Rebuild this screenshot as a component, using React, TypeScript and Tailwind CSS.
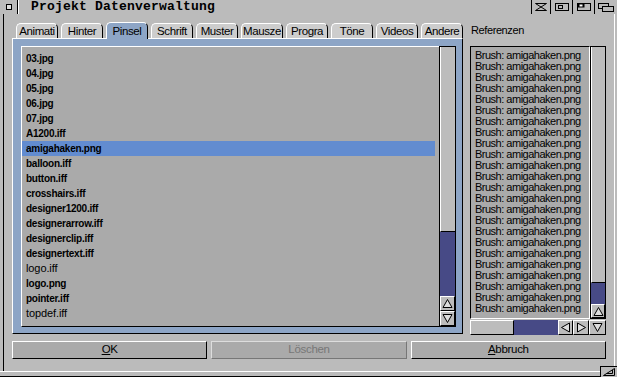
import React from "react";

const leftItems: { name: string; bold: boolean }[] = [
  { name: "03.jpg", bold: true },
  { name: "04.jpg", bold: true },
  { name: "05.jpg", bold: true },
  { name: "06.jpg", bold: true },
  { name: "07.jpg", bold: true },
  { name: "A1200.iff", bold: true },
  { name: "amigahaken.png", bold: true },
  { name: "balloon.iff", bold: true },
  { name: "button.iff", bold: true },
  { name: "crosshairs.iff", bold: true },
  { name: "designer1200.iff", bold: true },
  { name: "designerarrow.iff", bold: true },
  { name: "designerclip.iff", bold: true },
  { name: "designertext.iff", bold: true },
  { name: "logo.iff", bold: false },
  { name: "logo.png", bold: true },
  { name: "pointer.iff", bold: true },
  { name: "topdef.iff", bold: false },
];

const tabs = ["Animati", "Hinter", "Pinsel", "Schrift", "Muster", "Mausze", "Progra", "Töne", "Videos", "Andere"];

function ArrowIcon({ dir }: { dir: "up" | "down" | "left" | "right" }) {
  const d: Record<string, string> = {
    up: "M5.5 1.5 L10 9.5 H1 Z",
    down: "M1 1.5 H10 L5.5 9.5 Z",
    left: "M1.5 5.5 L9.5 1 V10 Z",
    right: "M9.5 5.5 L1.5 1 V10 Z",
  };
  return (
    <svg width="11" height="11" viewBox="0 0 11 11">
      <path d={d[dir]} fill="#dddddd" stroke="#000" strokeWidth="1" />
    </svg>
  );
}

function ArrowBtn({ dir, cls }: { dir: "up" | "down" | "left" | "right"; cls: string }) {
  return (
    <div className={`${cls} shrink-0 flex items-center justify-center bg-[#bcbcbc] border-t border-l border-white border-b border-r border-b-black border-r-black`}>
      <ArrowIcon dir={dir} />
    </div>
  );
}

export default function App() {
  return (
    <div className="relative w-[617px] h-[377px] bg-[#bbbbbb] flex flex-col overflow-hidden font-['Liberation_Sans',sans-serif] text-black">
      {/* Title bar */}
      <div className="h-[14px] shrink-0 flex items-stretch">
        <div className="w-[18px] flex items-center justify-center border-r border-black">
          <div className="w-[6px] h-[6px] border border-black bg-[#dddddd]" />
        </div>
        <div className="w-px bg-white" />
        <div className="flex-1 pl-[12px] font-['Liberation_Mono',monospace] font-bold text-[13px] leading-[14px] tracking-[0.2px] whitespace-nowrap">
          Projekt Datenverwaltung
        </div>
        <div className="w-[19px] flex items-center justify-center border-l border-black">
          <svg width="12" height="8" viewBox="0 0 12 8">
            <path d="M0.5 0.5 H11.5 L6 4 L11.5 7.5 H0.5 L6 4 Z" fill="none" stroke="#000" strokeWidth="1" />
          </svg>
        </div>
        <div className="w-[22px] flex items-center justify-center border-l border-black">
          <svg width="14" height="8" viewBox="0 0 14 8">
            <rect x="0.5" y="0.5" width="13" height="7" fill="none" stroke="#000" />
            <rect x="3.5" y="2.5" width="4" height="3" fill="none" stroke="#000" />
          </svg>
        </div>
        <div className="w-[22px] flex items-center justify-center border-l border-black">
          <svg width="14" height="8" viewBox="0 0 14 8">
            <rect x="0.5" y="0.5" width="13" height="7" fill="none" stroke="#000" />
            <rect x="0.5" y="0.5" width="7" height="4" fill="#000" />
            <rect x="2.5" y="1.5" width="3" height="2" fill="#ffffff" />
          </svg>
        </div>
        <div className="w-[23px] flex items-center justify-center border-l border-black">
          <svg width="16" height="9" viewBox="0 0 16 9">
            <rect x="0.5" y="0.5" width="10" height="5" fill="none" stroke="#000" />
            <rect x="4.5" y="3.5" width="11" height="5" fill="#bbbbbb" stroke="#000" />
          </svg>
        </div>
      </div>

      {/* Body */}
      <div className="flex-1 flex ml-[3px] border-l border-black">
        <div className="flex-1 flex flex-col pl-[8px] pr-[8px] pt-[8px]">
          <div className="flex gap-[7px]">
            {/* Left: register group */}
            <div className="w-[451px] flex flex-col">
              <div className="h-[16px] flex items-end gap-[3px] pl-[4px]">
                {tabs.map((t) =>
                  t === "Pinsel" ? (
                    <div
                      key={t}
                      className="relative z-10 -mb-px w-[42px] h-[17px] shrink-0 overflow-hidden rounded-t-[5px] bg-[#8da5c6] border-l border-t border-white border-r border-r-black flex items-center justify-center text-[11.5px] tracking-[-0.4px] leading-[14px] whitespace-nowrap"
                    >
                      {t}
                    </div>
                  ) : (
                    <div
                      key={t}
                      className="w-[42px] h-[15px] shrink-0 overflow-hidden rounded-t-[5px] bg-[#cdcdcd] border-l border-t border-white border-r border-r-black flex items-center justify-center text-[11.5px] tracking-[-0.4px] leading-[14px] whitespace-nowrap"
                    >
                      {t}
                    </div>
                  )
                )}
              </div>
              <div className="h-[296px] bg-[#8da5c6] border-l border-t border-white border-r border-b border-r-black border-b-black pl-[8px] pr-[5px] pt-[7px] flex">
                <div className="w-[418px] h-[281px] bg-[#aaaaaa] border-l border-t border-white border-b border-b-black pt-[4px] pr-[4px] overflow-hidden">
                  {leftItems.map((it) => (
                    <div
                      key={it.name}
                      className={`h-[15px] pl-[4px] flex items-center whitespace-nowrap ${
                        it.name === "amigahaken.png" ? "bg-[#628cd0]" : ""
                      } ${it.bold ? "font-bold text-[10px] tracking-[-0.25px]" : "text-[11px] tracking-[-0.1px]"}`}
                    >
                      {it.name}
                    </div>
                  ))}
                </div>
                <div className="w-[17px] h-[281px] flex flex-col border border-black bg-[#474a86]">
                  <div className="flex-1">
                    <div className="h-[185px] bg-[#bcbcbc] border-l border-white border-b border-b-black" />
                  </div>
                  <ArrowBtn dir="up" cls="h-[15px]" />
                  <ArrowBtn dir="down" cls="h-[15px]" />
                </div>
              </div>
            </div>

            {/* Right: Referenzen */}
            <div className="w-[136px] flex flex-col">
              <div className="h-[16px] pl-[1px] flex items-center text-[11px] tracking-[-0.4px] leading-[14px]">Referenzen</div>
              <div className="h-[8px]" />
              <div className="flex">
                <div className="w-[120px] h-[273px] bg-[#aaaaaa] border-l border-t border-black border-r border-b border-r-white border-b-white pt-[3px] pl-[4px] overflow-hidden">
                  {Array.from({ length: 24 }).map((_, i) => (
                    <div key={i} className="h-[11px] leading-[11px] text-[11px] tracking-[-0.5px] whitespace-nowrap">
                      Brush: amigahaken.png
                    </div>
                  ))}
                </div>
                <div className="w-[16px] h-[273px] flex flex-col border border-black bg-[#474a86]">
                  <div className="flex-1">
                    <div className="h-[236px] bg-[#bcbcbc] border-l border-white border-b border-b-black" />
                  </div>
                  <ArrowBtn dir="up" cls="h-[14px]" />
                </div>
              </div>
              <div className="flex h-[15px] mt-px">
                <div className="w-[44px] h-[15px] bg-[#bcbcbc] border-t border-l border-white border-b border-r border-b-black border-r-black" />
                <div className="w-[44px] h-[15px] bg-[#474a86]" />
                <ArrowBtn dir="left" cls="w-[15px] h-[15px]" />
                <ArrowBtn dir="right" cls="w-[16px] h-[15px]" />
                <ArrowBtn dir="down" cls="w-[17px] h-[15px]" />
              </div>
            </div>
          </div>

          {/* Buttons */}
          <div className="mt-[6px] flex gap-[4px]">
            <div className="flex-1 h-[18px] bg-[#aaaaaa] border-t border-l border-white border-b border-r border-b-black border-r-black flex items-center justify-center text-[11.5px] tracking-[-0.3px]">
              <span className="underline">O</span>K
            </div>
            <div className="flex-1 h-[18px] bg-[#aaaaaa] border-t border-l border-[#dddddd] border-b border-r border-b-[#777777] border-r-[#777777] flex items-center justify-center text-[11.5px] tracking-[-0.3px] text-[#777777]">
              Löschen
            </div>
            <div className="flex-1 h-[18px] bg-[#aaaaaa] border-t border-l border-white border-b border-r border-b-black border-r-black flex items-center justify-center text-[11.5px] tracking-[-0.3px]">
              <span className="underline">A</span>bbruch
            </div>
          </div>
        </div>
        <div className="w-px bg-white" />
        <div className="w-[3px]" />
      </div>

      {/* Bottom border */}
      <div className="h-[6px] shrink-0 border-t border-white border-b border-b-black" />

      {/* Size gadget */}
      <div className="absolute right-0 bottom-0 w-[17px] h-[11px] bg-[#bbbbbb] border-l border-t border-black flex items-center justify-center">
        <svg width="12" height="8" viewBox="0 0 12 8">
          <path d="M11.5 0.5 V7.5 H0.5 Z" fill="none" stroke="#000" />
          <path d="M4 5.5 H9.5 V2" fill="none" stroke="#000" />
        </svg>
      </div>
    </div>
  );
}
